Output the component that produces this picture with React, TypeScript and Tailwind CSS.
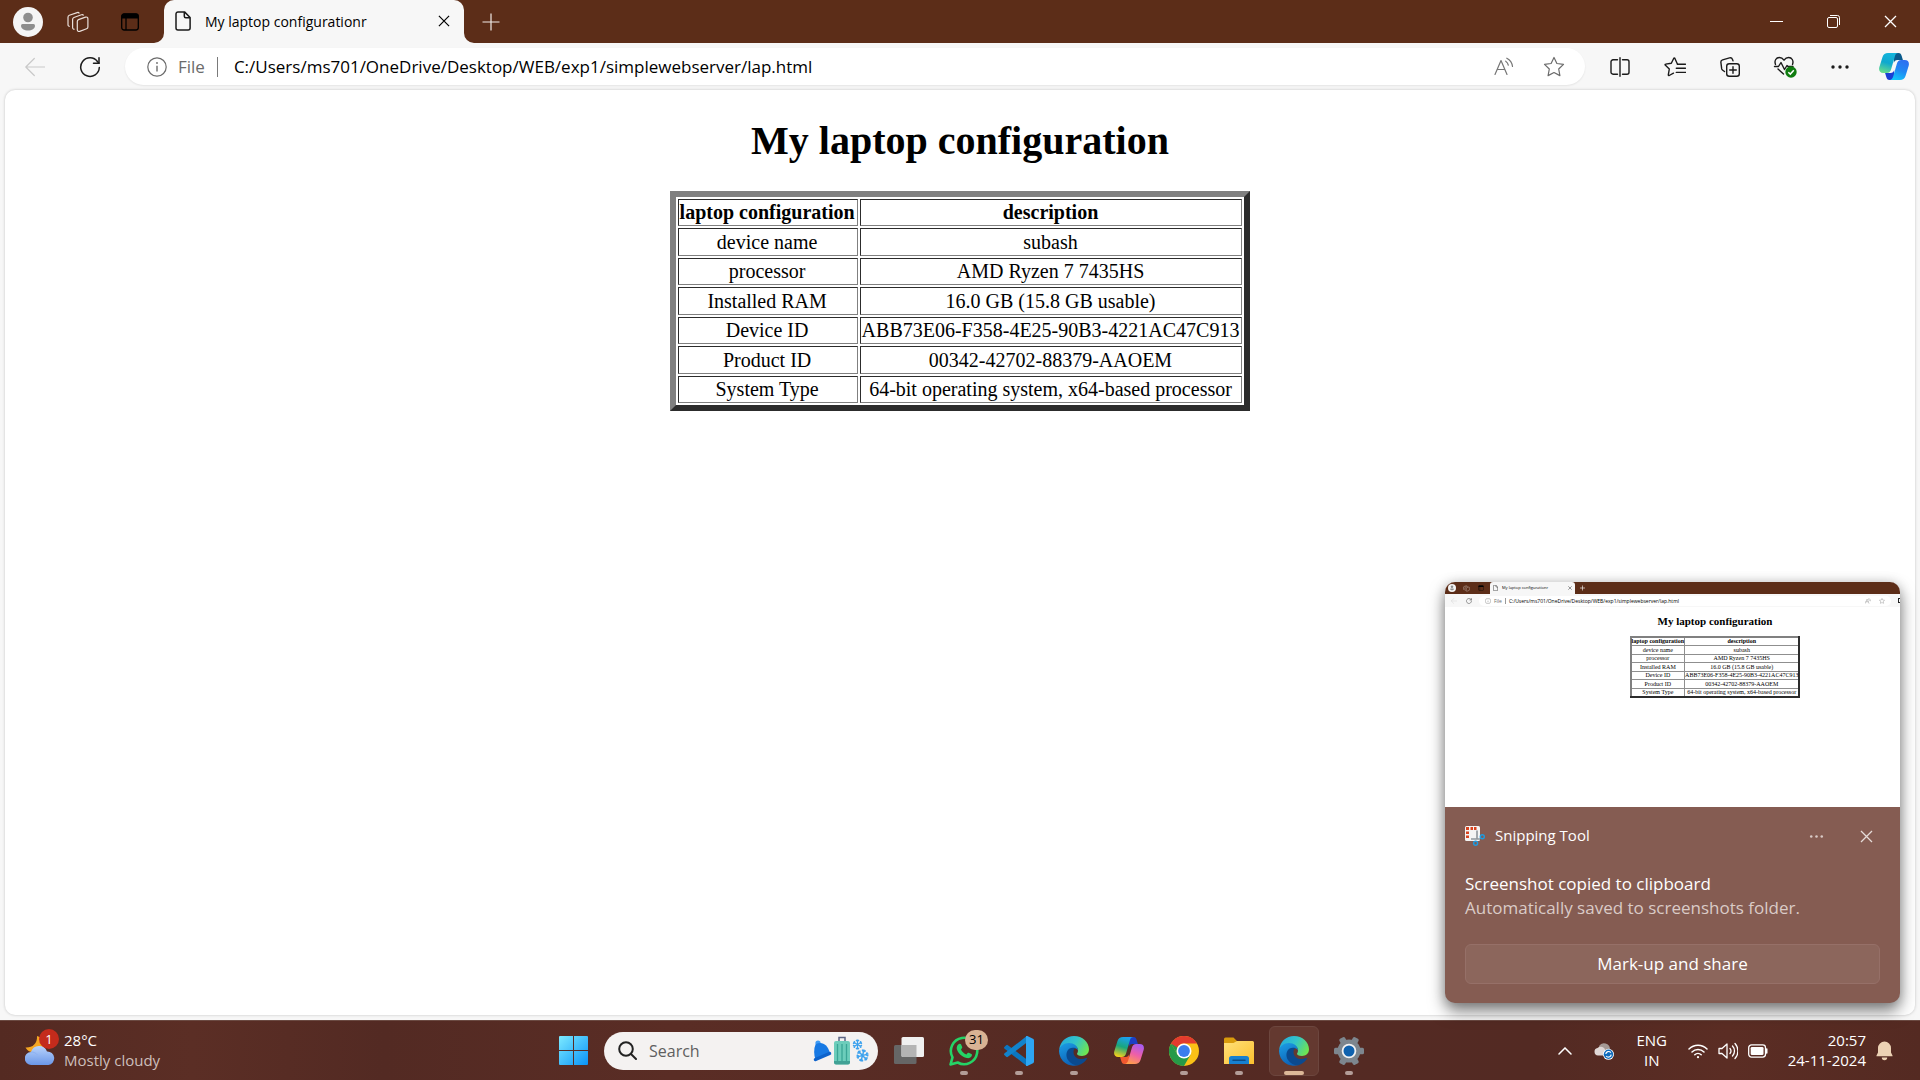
import React from "react";

type IconProps = { className?: string };

const ui = "font-['Open_Sans','Noto_Sans',sans-serif]";
const serif = "font-['Liberation_Serif',serif]";

const specs: [string, string][] = [
  ["device name", "subash"],
  ["processor", "AMD Ryzen 7 7435HS"],
  ["Installed RAM", "16.0 GB (15.8 GB usable)"],
  ["Device ID", "ABB73E06-F358-4E25-90B3-4221AC47C913"],
  ["Product ID", "00342-42702-88379-AAOEM"],
  ["System Type", "64-bit operating system, x64-based processor"],
];

/* ---------- line icons ---------- */

function Avatar({ className = "size-[30px]" }: IconProps) {
  return (
    <svg viewBox="0 0 30 30" className={className} aria-hidden="true">
      <circle cx="15" cy="15" r="15" fill="#f5f5f5" />
      <circle cx="15" cy="10.5" r="4.8" fill="#8e8e8e" />
      <path d="M8 18.5a1.5 1.5 0 0 1 1.5-1.5h11a1.5 1.5 0 0 1 1.5 1.5c0 3.4-3.2 5-7 5s-7-1.6-7-5Z" fill="#8e8e8e" />
    </svg>
  );
}

function Workspaces({ className = "size-6" }: IconProps) {
  return (
    <svg viewBox="0 0 24 24" className={className} fill="none" stroke="#e9dfda" strokeWidth="1.2" strokeLinejoin="round" aria-hidden="true">
      <path d="M12.5 9.6 19.5 7.1a1.8 1.8 0 0 1 2.4 1.7v8.1a2 2 0 0 1-1.3 1.9l-6.9 2.6a1.8 1.8 0 0 1-2.4-1.7v-8.2a2 2 0 0 1 1.2-1.9Z" />
      <path d="M17.6 5.6a1.7 1.7 0 0 0-2.2-.8L7.9 7.5a2 2 0 0 0-1.3 1.9v8.2c0 1 .9 1.8 2 1.6" />
      <path d="M13.3 3.5a1.7 1.7 0 0 0-2.1-.9L3.3 5.3A2 2 0 0 0 2 7.2v7.5c0 1 .8 1.7 1.7 1.6" />
    </svg>
  );
}

function TabActions({ className = "size-5" }: IconProps) {
  return (
    <svg viewBox="0 0 20 20" className={className} aria-hidden="true">
      <rect x="1.7" y="2" width="16.6" height="16" rx="2.5" fill="none" stroke="#000" strokeWidth="1.3" />
      <path d="M1.5 6.5V4A2.5 2.5 0 0 1 4 1.5h12A2.5 2.5 0 0 1 18.5 4v2.5Z" fill="#000" />
      <path d="M6 6v12" stroke="#000" strokeWidth="1.3" />
    </svg>
  );
}

function PageIcon({ className = "h-5 w-4" }: IconProps) {
  return (
    <svg viewBox="0 0 16 20" className={className} fill="none" stroke="#1b1b1b" strokeWidth="1.5" strokeLinejoin="round" aria-hidden="true">
      <path d="M3 .9h6.500l5.600 5.600V17a2 2 0 0 1-2 2H3a2 2 0 0 1-2-2V2.900a2 2 0 0 1 2-2Z" />
      <path d="M9.300 1v4.200a1.500 1.500 0 0 0 1.500 1.500H15" />
    </svg>
  );
}

function Cross({ className = "size-[13px]" }: IconProps) {
  return (
    <svg viewBox="0 0 13 13" className={className} fill="none" stroke="currentColor" aria-hidden="true">
      <path d="m1 1 11 11M12 1 1 12" strokeWidth="1.300" />
    </svg>
  );
}

function BackArrow({ className = "size-5" }: IconProps) {
  return (
    <svg viewBox="0 0 20 20" className={className} fill="none" stroke="#c9c9c9" strokeWidth="1.2" strokeLinecap="round" strokeLinejoin="round" aria-hidden="true">
      <path d="M19.500 10H.8M9.300 1.500.8 10l8.500 8.500" />
    </svg>
  );
}

function Reload({ className = "size-[22px]" }: IconProps) {
  return (
    <svg viewBox="0 0 22 22" className={className} fill="none" stroke="#1b1b1b" strokeWidth="1.5" strokeLinecap="round" strokeLinejoin="round" aria-hidden="true">
      <path d="M20.300 11.500A9.300 9.300 0 1 1 18.600 5.700L20 7.300" />
      <path d="M20 1.800v5.500h-5.500" />
    </svg>
  );
}

function Info({ className = "size-5" }: IconProps) {
  return (
    <svg viewBox="0 0 20 20" className={className} fill="none" stroke="#6b6b6b" strokeWidth="1.2" aria-hidden="true">
      <circle cx="10" cy="10" r="9.2" />
      <path d="M10 8.800v5.700" strokeWidth="1.4" />
      <circle cx="10" cy="6" r=".9" fill="#6b6b6b" stroke="none" />
    </svg>
  );
}

function ReadAloud({ className = "size-5" }: IconProps) {
  return (
    <svg viewBox="0 0 20 20" className={className} fill="none" stroke="#767676" strokeWidth="1.2" strokeLinecap="round" strokeLinejoin="round" aria-hidden="true">
      <path d="M1 17.500 7 3.500l6 14M3.200 12.500h7.700" />
      <path d="M11.700 4.200c1.500 1 2.300 2.300 2.600 4M12.800 1.200c3.300 1.700 5.300 4.400 5.700 8.300" />
    </svg>
  );
}

function Star({ className = "size-[22px]" }: IconProps) {
  return (
    <svg viewBox="0 0 22 22" className={className} fill="none" stroke="#6b6b6b" strokeWidth="1.2" strokeLinejoin="round" aria-hidden="true">
      <path d="M11 1.500l2.900 6 6.600.9-4.800 4.600 1.200 6.600L11 16.500l-5.900 3.100L6.300 13 1.500 8.400l6.600-.9L11 1.500Z" />
    </svg>
  );
}

function SplitScreen() {
  return (
    <svg viewBox="0 0 20 20" className="size-5" fill="none" stroke="#1b1b1b" strokeWidth="1.4" strokeLinecap="round" aria-hidden="true">
      <path d="M10 .8v18.400M7.500 2.800H3a2 2 0 0 0-2 2v10.400a2 2 0 0 0 2 2h4.500M12.500 2.800H17a2 2 0 0 1 2 2v10.400a2 2 0 0 1-2 2h-4.500" />
    </svg>
  );
}

function Favorites() {
  return (
    <svg viewBox="0 0 22 20" className="h-5 w-[22px]" fill="none" stroke="#1b1b1b" strokeWidth="1.4" strokeLinecap="round" strokeLinejoin="round" aria-hidden="true">
      <path d="M13.500 7.200 10.800 1.200a.6.600 0 0 0-1 0L7.300 6.300l-5.700.8a.6.600 0 0 0-.4 1L5.300 12l-1 5.900a.6.600 0 0 0 .9.600l4.300-2.300" />
      <path d="M13.500 7.200h8M12.300 11.300h9.200M12.300 15.400h9.200" />
    </svg>
  );
}

function Collections() {
  return (
    <svg viewBox="0 0 20 20" className="size-5" fill="none" stroke="#1b1b1b" strokeWidth="1.4" strokeLinecap="round" strokeLinejoin="round" aria-hidden="true">
      <rect x="6.700" y="6.700" width="12.600" height="12.600" rx="2.500" />
      <path d="M13 9.700v6.600M9.700 13h6.600M4.500 14.500 2.700 13.200a2 2 0 0 1-1-1.300L.9 5.500a2.500 2.500 0 0 1 1.700-2.700L9.500.9a2.500 2.500 0 0 1 3 1.500l.5 1.500" />
    </svg>
  );
}

function Essentials() {
  return (
    <svg viewBox="0 0 24 22" className="h-[22px] w-6" fill="none" aria-hidden="true">
      <g stroke="#1b1b1b" strokeWidth="1.4" strokeLinecap="round" strokeLinejoin="round">
        <path d="M2.500 8.500C1 4.500 3.300 1.500 6.300 1.500c2 0 3.500 1 4.700 2.700 1.200-1.700 2.700-2.700 4.700-2.700 3 0 5.300 3 3.800 7" />
        <path d="M1.500 10.500h4l2.500-4 3.500 7 2.500-4 1 1h5M5 13l5.500 5" />
      </g>
      <circle cx="18" cy="16" r="5.700" fill="#107c10" />
      <path d="m15.300 16.200 2 1.900 3.500-3.900" stroke="#fff" strokeWidth="1.5" />
    </svg>
  );
}

function Dots({ className = "h-1 w-[18px]" }: IconProps) {
  return (
    <svg viewBox="0 0 18 4" className={className} fill="currentColor" aria-hidden="true">
      <circle cx="2" cy="2" r="1.700" />
      <circle cx="9" cy="2" r="1.700" />
      <circle cx="16" cy="2" r="1.700" />
    </svg>
  );
}

/* ---------- colour icons ---------- */

function Copilot({ vivid = false }: { vivid?: boolean }) {
  const k = vivid ? "v" : "b";
  const a = vivid ? ["#1ba0f2", "#19a67c", "#f4cf1c"] : ["#14b5dc", "#0fa8cf", "#67dd8b"];
  const b = vivid ? ["#a85cf0", "#ee5fa8", "#ffa04a"] : ["#2f6ff0", "#2088f3", "#12c7fa"];
  return (
    <svg viewBox="0 0 30 27" className="h-[27px] w-[30px]" aria-hidden="true">
      <defs>
        <linearGradient id={`cpa${k}`} x1=".6" y1="0" x2=".3" y2="1">
          <stop offset="0" stopColor={a[0]} />
          <stop offset=".5" stopColor={a[1]} />
          <stop offset="1" stopColor={a[2]} />
        </linearGradient>
        <linearGradient id={`cpb${k}`} x1=".7" y1="0" x2=".3" y2="1">
          <stop offset="0" stopColor={b[0]} />
          <stop offset=".5" stopColor={b[1]} />
          <stop offset="1" stopColor={b[2]} />
        </linearGradient>
      </defs>
      <path d="M15 0h4.500c2 0 2.600 1.200 3.200 3l1.200 4h-5.500c-2 0-3 1-3.600 3Z" fill={vivid ? "#1d3fc4" : "#0a5a8c"} />
      <path d="M15 27h-4.500c-2 0-2.600-1.200-3.200-3l-1.200-4h5.500c2 0 3-1 3.600-3Z" fill={vivid ? "#f0582f" : "#1a3fd4"} />
      <path d="M9 0h10.500c-2 0-3 1.200-3.600 3.200L12.200 16c-.7 2.500-2 4-4.500 4H4.300C.8 20-.5 17.500.3 14.300L3.500 4C4.300 1.300 6.200 0 9 0Z" fill={`url(#cpa${k})`} />
      <path d="M21 27H10.500c2 0 3-1.200 3.600-3.200L17.800 11c.7-2.500 2-4 4.500-4h3.400c3.500 0 4.800 2.500 4 5.700L26.500 23c-.8 2.700-2.700 4-5.500 4Z" fill={`url(#cpb${k})`} />
    </svg>
  );
}

function Weather() {
  return (
    <svg viewBox="0 0 30 30" className="size-[30px]" aria-hidden="true">
      <defs>
        <linearGradient id="cloud" x1="0" y1="0" x2="0" y2="1">
          <stop offset="0" stopColor="#b9d3fb" />
          <stop offset="1" stopColor="#6b97e8" />
        </linearGradient>
      </defs>
      <path d="M12 0c4 1 7 4.500 7 8.500 0 5-4 8-9 8-4.500 0-8-2-9.500-5C7 12 12.500 8 12 0Z" fill="#f5a623" />
      <path d="M6.500 29a6.500 6.500 0 0 1-.5-13A8.500 8.500 0 0 1 22 15.500a6.800 6.800 0 0 1 1.500 13.500Z" fill="url(#cloud)" />
      <path d="M6 16c3 0 5 1 6.500 3" stroke="#8db2f3" fill="none" />
    </svg>
  );
}

function WindowsLogo() {
  return (
    <svg viewBox="0 0 29 29" className="size-[29px]" aria-hidden="true">
      <defs>
        <linearGradient id="win" x1="0" y1="0" x2="1" y2="1">
          <stop offset="0" stopColor="#7deaff" />
          <stop offset="1" stopColor="#0a93f7" />
        </linearGradient>
      </defs>
      <path d="M1 0h13v14H0V1a1 1 0 0 1 1-1Zm14 0h13a1 1 0 0 1 1 1v13H15ZM0 15h14v14H1a1 1 0 0 1-1-1Zm15 0h14v13a1 1 0 0 1-1 1H15Z" fill="url(#win)" />
    </svg>
  );
}

function SearchArt() {
  const flake = "M0-5V5M-4.300-2.500l8.600 5M-4.300 2.500l8.600-5M-1.500-4.500 0-3l1.500-1.500M-1.500 4.500 0 3l1.500 1.500M-4.600-.8l2-.6-.5-2M4.600.8l-2 .6.500 2M-4.600.8l2 .6-.5 2M4.600-.8l-2-.6.5-2";
  return (
    <svg viewBox="0 0 57 32" className="h-8 w-[57px]" aria-hidden="true">
      <circle cx="5" cy="8" r="2.600" fill="#3d9bf5" />
      <path d="M2.500 9.500c6-3.500 12-.5 14.500 9L2.500 24.500C.8 20 .6 14 2.500 9.500Z" fill="#1779e4" />
      <path d="m2.500 24.500 14-6" stroke="#0d62cb" strokeWidth="3.500" strokeLinecap="round" />
      <path d="M26 6V2.500h6V6" fill="none" stroke="#5b6684" strokeWidth="1.5" />
      <rect x="21" y="6" width="16" height="23.500" rx="2" fill="#6ccdbb" />
      <path d="M24.500 9v17M29 9v17M33.500 9v17" stroke="#3aa596" strokeWidth="1.3" />
      <path d="M21 26h16v1.500a2 2 0 0 1-2 2H23a2 2 0 0 1-2-2Z" fill="#2f8f84" opacity=".7" />
      <g fill="none" stroke="#3da2ee" strokeWidth="1.2">
        <path d={flake} transform="translate(44.500 9.500)" />
        <path d={flake} transform="translate(49.500 20.500) rotate(15) scale(1.250)" />
      </g>
    </svg>
  );
}

function TaskView() {
  return (
    <svg viewBox="0 0 30 30" className="size-[30px]" aria-hidden="true">
      <rect y="9" width="22.500" height="19" rx="1.500" fill="#666" />
      <rect x="7.500" y="1" width="22.500" height="20" rx="1.500" fill="#f0f0f0" />
      <path d="M7.500 9h15v12H9a1.500 1.500 0 0 1-1.500-1.500Z" fill="#b4b4b4" />
    </svg>
  );
}

function WhatsApp() {
  return (
    <svg viewBox="0 0 30 30" className="size-[30px]" aria-hidden="true">
      <path d="M1.500 28.500 3.500 21.300A13.200 13.200 0 1 1 8.700 26.500Z" fill="none" stroke="#25d366" strokeWidth="2.600" strokeLinejoin="round" />
      <path d="M10.500 7.700c.7-.2 1.200 0 1.500.6l1.200 2.800c.2.500 0 1-1.200 2.300 1.200 2.500 3 4 5.500 5 1.300-1.600 1.700-1.800 2.200-1.600l2.700 1.300c.7.400.6 1 .4 1.700-.7 2-3 2.800-5 2.300-5-1.200-8.500-4.500-10-9-.5-2.200.7-4.800 2.700-5.400Z" fill="#25d366" />
    </svg>
  );
}

function VSCode() {
  return (
    <svg viewBox="0 0 30 30" className="size-[30px]" aria-hidden="true">
      <path d="M.6 10.800 2.200 9.200a1.300 1.300 0 0 1 1.700 0L23.500 24v5.600c-.6.200-1.200 0-1.700-.4L.6 12.800a1.300 1.300 0 0 1 0-2Z" fill="#0b76c0" />
      <path d="M.6 19.200 2.200 20.800a1.300 1.300 0 0 0 1.700 0L23.500 6V.4c-.6-.2-1.200 0-1.700.4L.6 17.200a1.300 1.300 0 0 0 0 2Z" fill="#1283cc" />
      <path d="M22 .2c.5-.3 1.200-.3 1.800 0L29 2.800c.6.300 1 1 1 1.700v21c0 .7-.4 1.400-1 1.700l-5.200 2.600c-.6.300-1.300.3-1.800 0Z" fill="#2ea6f3" />
    </svg>
  );
}

function Edge({ id }: { id: string }) {
  return (
    <svg viewBox="0 0 30 30" className="size-[30px]" aria-hidden="true">
      <defs>
        <linearGradient id={`${id}a`} x1="0" y1=".2" x2="1" y2=".6">
          <stop offset="0" stopColor="#25a9dc" />
          <stop offset=".5" stopColor="#33c4c9" />
          <stop offset="1" stopColor="#6ee552" />
        </linearGradient>
        <linearGradient id={`${id}b`} x1=".2" y1="0" x2=".6" y2="1">
          <stop offset="0" stopColor="#1b9be3" />
          <stop offset="1" stopColor="#0c5fb4" />
        </linearGradient>
      </defs>
      <path d="M.2 13.500C1 5.800 7.300 0 15 0c8.500 0 15 6.200 15 13.300 0 4.500-3.200 6.700-7 6.700-3.500 0-5-1.200-5-2.200 0-.7 1-1.200 1-3.300C19 11 15.500 8.500 11 8.500 6 8.500 2 10.500.2 13.500Z" fill={`url(#${id}a)`} />
      <path d="M0 15C.5 10 5 7 9.800 7 15 7 19 10 19 14.500c-.8-1.700-2.500-2.700-4.300-2.500-3.200.3-5.200 3.500-4.700 7.500.6 4.800 5 9 9.500 9.600A15 15 0 0 1 0 15Z" fill={`url(#${id}b)`} />
      <path d="M10.600 12.500C7 15 6.500 20 9 24c2.500 3.800 6.500 5.500 10.300 5.300 3.700-1.100 6.700-3.500 8.600-6.600.3-.6-.2-1-.8-.7-5.500 2.600-12.600.5-12.600-6 0-1.500.7-3 1.800-3.900-2-.7-4-.6-5.700.4Z" fill="#0b4a8f" />
    </svg>
  );
}

function Chrome() {
  return (
    <svg viewBox="0 0 30 30" className="size-[30px]" aria-hidden="true">
      <circle cx="15" cy="15" r="15" fill="#fbc116" />
      <path d="M2 7.500A15 15 0 0 0 15 30l6.500-11.200L15 15l-6.500 3.700Z" fill="#269a48" />
      <path d="M2 7.500A15 15 0 0 1 28 7.500H15a7.500 7.500 0 0 0-7 4.800L6.300 14Z" fill="#e33b2e" />
      <path d="M2 7.500 8.500 18.700 9 12Z" fill="#269a48" />
      <circle cx="15" cy="15" r="7.500" fill="#fff" />
      <circle cx="15" cy="15" r="5.900" fill="#3b7ded" />
    </svg>
  );
}

function Explorer() {
  return (
    <svg viewBox="0 0 30 28" className="h-7 w-[30px]" aria-hidden="true">
      <defs>
        <linearGradient id="folder" x1="0" y1="0" x2="1" y2="1">
          <stop offset="0" stopColor="#ffe07a" />
          <stop offset="1" stopColor="#fcc02e" />
        </linearGradient>
      </defs>
      <path d="M0 2a1.500 1.500 0 0 1 1.500-1.500h8L13 4h15.500v5H0Z" fill="#d99b0c" />
      <path d="M0 6h9.500L13 4h15.500A1.500 1.500 0 0 1 30 5.500V27H0Z" fill="url(#folder)" />
      <path d="M5 21.500A2.500 2.500 0 0 1 7.500 19h15a2.500 2.500 0 0 1 2.500 2.500V27H5Z" fill="#1780d0" />
      <path d="M9 23.200h12" stroke="#0b4c86" strokeWidth="1.5" strokeLinecap="round" />
    </svg>
  );
}

function Settings() {
  return (
    <svg viewBox="0 0 30 30" className="size-[30px]" aria-hidden="true">
      <g fill="#7d868e">
        <circle cx="15" cy="15" r="11.500" />
        <rect x="11.800" y="0" width="6.400" height="30" rx="1.500" transform="rotate(30 15 15)" />
        <rect x="11.800" y="0" width="6.400" height="30" rx="1.500" transform="rotate(90 15 15)" />
        <rect x="11.800" y="0" width="6.400" height="30" rx="1.500" transform="rotate(150 15 15)" />
      </g>
      <circle cx="15" cy="15" r="6.400" fill="#0f62ae" stroke="#f2f2f2" strokeWidth="1.800" />
    </svg>
  );
}

function SnippingTool() {
  return (
    <svg viewBox="0 0 20 20" className="size-5" aria-hidden="true">
      <rect width="15" height="15" rx="1.500" fill="#f4f4f4" />
      <path d="M1 1h3v3H1Zm4.500 0h2.500v3H5.500ZM9 1h2.500v3H9ZM1 5.500h3V8H1Zm0 4h3V12H1Z" fill="#d8431f" />
      <path d="M12 4.500v8.500M6 13h9" stroke="#8f979d" strokeWidth="1.600" />
      <circle cx="17.300" cy="10.800" r="2" fill="none" stroke="#1e9be0" strokeWidth="1.400" />
      <circle cx="10.600" cy="17.300" r="2" fill="none" stroke="#1e9be0" strokeWidth="1.400" />
    </svg>
  );
}

/* ---------- browser window ---------- */

function TitleBar() {
  const winBtn = "flex h-full w-[57px] items-center justify-center";
  return (
    <header className="flex h-[43px] items-stretch bg-[#5c2d18] text-white">
      <button aria-label="Profile" className="ml-[13px] flex items-center"><Avatar /></button>
      <button aria-label="Workspaces" className="ml-[23px] flex items-center"><Workspaces /></button>
      <button aria-label="Tab actions" className="ml-[30px] flex items-center"><TabActions /></button>
      <div className="relative ml-6 flex w-[300px] items-center rounded-t-[10px] bg-[#f7f7f7] pr-3 pb-px pl-[11px] text-black">
        <svg viewBox="0 0 10 10" className="absolute bottom-0 -left-[10px] size-[10px]" aria-hidden="true"><path d="M10 0v10H0A10 10 0 0 0 10 0Z" fill="#f7f7f7" /></svg>
        <svg viewBox="0 0 10 10" className="absolute -right-[10px] bottom-0 size-[10px]" aria-hidden="true"><path d="M0 0v10h10A10 10 0 0 1 0 0Z" fill="#f7f7f7" /></svg>
        <PageIcon />
        <span className="ml-[14px] flex-1 text-[14px] whitespace-nowrap">My laptop configurationr</span>
        <button aria-label="Close tab" className="flex size-4 items-center justify-center"><Cross className="size-3" /></button>
      </div>
      <button aria-label="New tab" className="ml-[18px] flex items-center">
        <svg viewBox="0 0 18 18" className="size-[18px]" aria-hidden="true"><path d="M9 .5v17M.5 9h17" stroke="#f1ebe8" strokeWidth="1.200" /></svg>
      </button>
      <div className="mr-px ml-auto flex">
        <button aria-label="Minimize" className={winBtn}>
          <svg viewBox="0 0 13 13" className="size-[13px]" aria-hidden="true"><path d="M0 6.500h13" stroke="#fff" /></svg>
        </button>
        <button aria-label="Restore" className={winBtn}>
          <svg viewBox="0 0 13 13" className="size-[13px]" fill="none" stroke="#fff" aria-hidden="true">
            <rect x=".5" y="2.500" width="10" height="10" rx="1.500" />
            <path d="M3 .5h7.500a2 2 0 0 1 2 2V10" />
          </svg>
        </button>
        <button aria-label="Close" className={winBtn}><Cross /></button>
      </div>
    </header>
  );
}

function Toolbar() {
  const btn = "flex h-9 w-[55px] shrink-0 items-center justify-center text-[#1b1b1b]";
  return (
    <nav aria-label="Browser toolbar" className="flex h-[46px] items-center pt-px pl-[7px]">
      <button aria-label="Back" className={btn}><BackArrow /></button>
      <button aria-label="Reload" className={btn}><Reload /></button>
      <div className="mr-[7px] ml-2 flex h-[37px] flex-1 items-center rounded-full bg-white pr-5 pl-[22px] shadow-[0_1px_2px_rgba(0,0,0,0.08)]">
        <Info />
        <label htmlFor="address" className="ml-[11px] text-[17px] text-[#6b6b6b]">File</label>
        <span className="ml-3 h-5 w-px bg-[#7a7a7a]" />
        <input id="address" type="text" defaultValue="C:/Users/ms701/OneDrive/Desktop/WEB/exp1/simplewebserver/lap.html" className="ml-4 min-w-0 flex-1 bg-transparent text-[17px] text-black outline-none" />
        <button aria-label="Read aloud"><ReadAloud /></button>
        <button aria-label="Add to favourites" className="ml-[29px]"><Star /></button>
      </div>
      <button aria-label="Split screen" className={btn}><SplitScreen /></button>
      <button aria-label="Favourites" className={btn}><Favorites /></button>
      <button aria-label="Collections" className={btn}><Collections /></button>
      <button aria-label="Browser essentials" className={btn}><Essentials /></button>
      <button aria-label="Settings and more" className={btn}><Dots /></button>
      <button aria-label="Copilot" className="flex h-9 w-[53px] shrink-0 items-center justify-center"><Copilot /></button>
    </nav>
  );
}

function LaptopPage() {
  const cell = "border border-t-[#2c2c2c] border-r-[#808080] border-b-[#808080] border-l-[#2c2c2c] py-0 pr-0.5 pl-px";
  return (
    <main className={`flex-1 pt-7 text-black ${serif}`}>
      <h1 className="mb-[27px] text-center text-[40px] leading-[46px] font-bold">My laptop configuration</h1>
      <table className="mx-auto border-separate border-spacing-[2px] border-6 border-t-[#808080] border-r-[#2c2c2c] border-b-[#2c2c2c] border-l-[#808080] text-center text-[20px] leading-[23px] whitespace-nowrap">
        <thead>
          <tr className="h-[27px]">
            <th scope="col" className={cell}>laptop configuration</th>
            <th scope="col" className={cell}>description</th>
          </tr>
        </thead>
        <tbody>
          {specs.map(([k, v]) => (
            <tr key={k} className="h-[27px] odd:h-7">
              <td className={cell}>{k}</td>
              <td className={cell}>{v}</td>
            </tr>
          ))}
        </tbody>
      </table>
    </main>
  );
}

/* ---------- notification ---------- */

function Thumbnail() {
  const cell = "border border-[#8f8f8f] p-0";
  return (
    <div className="flex h-[225px] flex-col overflow-hidden rounded-t-[10px] bg-white text-black">
      <div className="flex h-3 items-stretch bg-[#5c2d18]">
        <span className="ml-[3px] flex items-center"><Avatar className="size-2" /></span>
        <span className="ml-[7px] flex items-center"><Workspaces className="size-[7px]" /></span>
        <span className="ml-2 flex items-center"><TabActions className="size-[6px]" /></span>
        <span className="ml-[6px] flex w-[85px] items-center rounded-t-[3px] bg-[#f7f7f7] px-[3px]">
          <PageIcon className="h-[6px] w-[5px]" />
          <span className="ml-1 flex-1 text-[4px] leading-3 whitespace-nowrap">My laptop configurationr</span>
          <Cross className="size-1" />
        </span>
        <svg viewBox="0 0 5 5" className="ml-[5px] w-[5px]" aria-hidden="true"><path d="M2.500 0v5M0 2.500h5" stroke="#fff" strokeWidth=".6" /></svg>
      </div>
      <div className="flex h-[13px] items-center bg-[#f7f7f7] pl-[6px]">
        <BackArrow className="size-[6px]" />
        <Reload className="ml-[9px] size-[6px]" />
        <div className="mr-[7px] ml-[7px] flex h-[10px] flex-1 items-center rounded-full bg-white px-[6px] text-[5px] leading-[10px]">
          <Info className="size-[6px]" />
          <span className="ml-[3px] text-[#6b6b6b]">File</span>
          <span className="mx-[3px] h-[6px] w-px bg-[#999]" />
          <span className="flex-1 whitespace-nowrap">C:/Users/ms701/OneDrive/Desktop/WEB/exp1/simplewebserver/lap.html</span>
          <ReadAloud className="size-[6px]" />
          <Star className="ml-2 size-[6px]" />
        </div>
        <span className="h-[5px] w-[2px] border border-r-0 border-[#222]" />
      </div>
      <div className={`pt-2 pr-[93px] pl-[178px] whitespace-nowrap ${serif}`}>
        <p className="mb-2 flex justify-center text-[11px] leading-[13px] font-bold">My laptop configuration</p>
        <div className="flex justify-center">
          <table className="border-2 border-t-[#808080] border-r-[#2c2c2c] border-b-[#2c2c2c] border-l-[#808080] text-center text-[6px] leading-[7px]">
            <thead>
              <tr>
                <th scope="col" className={cell}>laptop configuration</th>
                <th scope="col" className={cell}>description</th>
              </tr>
            </thead>
            <tbody>
              {specs.map(([k, v]) => (
                <tr key={k} className="odd:h-[9px]">
                  <td className={cell}>{k}</td>
                  <td className={cell}>{v}</td>
                </tr>
              ))}
            </tbody>
          </table>
        </div>
      </div>
    </div>
  );
}

function Notification() {
  return (
    <aside aria-label="Notification" className="absolute right-5 bottom-[77px] w-[455px] rounded-[10px] bg-[#855c52] text-white shadow-[0_8px_16px_rgba(0,0,0,0.5),0_0_12px_rgba(0,0,0,0.15)]">
      <Thumbnail />
      <div className="px-5 py-[19px]">
        <div className="flex h-5 items-center">
          <SnippingTool />
          <span className="ml-[10px] flex-1 pb-0.5 text-[15px] leading-5">Snipping Tool</span>
          <button aria-label="More options" className="text-[#d9cac6]"><Dots className="h-[3px] w-[15px]" /></button>
          <button aria-label="Dismiss" className="mr-[7px] ml-9 text-[#e6dcd9]"><Cross /></button>
        </div>
        <p className="mt-[26px] text-[17px] leading-6">Screenshot copied to clipboard</p>
        <p className="text-[17px] leading-6 text-[#dacbc7]">Automatically saved to screenshots folder.</p>
        <button className="mt-6 h-10 w-full rounded-md border border-[#967068] bg-[#8c665c] text-[17px]">Mark-up and share</button>
      </div>
    </aside>
  );
}

/* ---------- taskbar ---------- */

type TaskbarApp = { name: string; icon: React.ReactNode; state?: "running" | "active"; badge?: string };

const apps: TaskbarApp[] = [
  { name: "Task view", icon: <TaskView /> },
  { name: "WhatsApp", icon: <WhatsApp />, state: "running", badge: "31" },
  { name: "Visual Studio Code", icon: <VSCode />, state: "running" },
  { name: "Microsoft Edge", icon: <Edge id="e1" />, state: "running" },
  { name: "Copilot", icon: <Copilot vivid /> },
  { name: "Google Chrome", icon: <Chrome />, state: "running" },
  { name: "File Explorer", icon: <Explorer />, state: "running" },
  { name: "Microsoft Edge window", icon: <Edge id="e2" />, state: "active" },
  { name: "Settings", icon: <Settings />, state: "running" },
];

function Taskbar() {
  return (
    <footer className="grid h-[60px] grid-cols-[1fr_auto_1fr] items-center border-t border-[#6b4a42] bg-[linear-gradient(90deg,#542a22,#5b2e25_10%,#532a23_20%,#5a2d25_35%,#552a23_60%,#532a23_80%,#5b2d24_90%,#542a22)] text-white">
      <button className="flex items-center pl-[25px] text-left text-[15px] leading-5">
        <span className="relative">
          <Weather />
          <span className="absolute -top-[7px] left-[14px] flex size-5 items-center justify-center rounded-full bg-[#c42b1c] text-[13px]">1</span>
        </span>
        <span className="ml-[9px] pb-0.5">
          <span className="block">28°C</span>
          <span className="block text-[#cdbfbb]">Mostly cloudy</span>
        </span>
      </button>
      <div className="flex items-center gap-[5px] pl-0.5">
        <button aria-label="Start" className="flex size-[50px] items-center justify-center"><WindowsLogo /></button>
        <div className="mx-px flex h-[38px] w-[274px] items-center rounded-full bg-[#f4f2f1] pr-2 pl-[14px]">
          <svg viewBox="0 0 19 19" className="size-[19px] shrink-0" fill="none" stroke="#222" strokeWidth="2" aria-hidden="true">
            <circle cx="8" cy="8" r="6.800" />
            <path d="m13 13 5 5" strokeLinecap="round" />
          </svg>
          <input type="search" aria-label="Search" placeholder="Search" className="ml-3 min-w-0 flex-1 bg-transparent text-[16px] text-black outline-none placeholder:text-[#5f5f5f]" />
          <SearchArt />
        </div>
        {apps.map((a) => (
          <button key={a.name} aria-label={a.name} className={`relative flex size-[50px] items-center justify-center rounded-md border ${a.state === "active" ? "border-[#6c463e] bg-[#643930]" : "border-transparent"}`}>
            {a.icon}
            {a.badge && (
              <span className="absolute top-[3px] right-0 flex h-5 w-[23px] items-center justify-center rounded-full bg-[#d9b394] text-[13px] text-black">{a.badge}</span>
            )}
            {a.state && (
              <span className={`absolute bottom-0 left-1/2 h-1 -translate-x-1/2 rounded-full ${a.state === "active" ? "w-5 bg-[#dcb898]" : "w-2 bg-[#b39d98]"}`} />
            )}
          </button>
        ))}
      </div>
      <div className="flex items-center justify-end pr-[27px] text-[15px] leading-5">
        <button aria-label="Show hidden icons">
          <svg viewBox="0 0 14 8" className="h-2 w-[14px]" fill="none" stroke="#fff" strokeWidth="1.500" strokeLinecap="round" aria-hidden="true"><path d="m1 7 6-6 6 6" /></svg>
        </button>
        <button aria-label="OneDrive" className="ml-[22px]">
          <svg viewBox="0 0 20 18" className="h-[18px] w-5" aria-hidden="true">
            <path d="M5 4a6 6 0 0 1 11 3v4H6Z" fill="#a59995" />
            <path d="M4 13.500a3.800 3.800 0 0 1-.5-7.500 5 5 0 0 1 7 .5l3 7Z" fill="#e0d8d6" />
            <circle cx="14.500" cy="12.300" r="5.500" fill="#fff" />
            <circle cx="14.500" cy="12.300" r="4.700" fill="#0f6cbd" />
            <path d="M11.800 12a2.800 2.800 0 0 1 5-1.400M17.200 12.600a2.800 2.800 0 0 1-5 1.400" fill="none" stroke="#fff" strokeWidth="1.200" />
          </svg>
        </button>
        <button className="ml-[22px] w-8 pb-0.5 text-center">
          <span className="block">ENG</span>
          <span className="block">IN</span>
        </button>
        <button aria-label="Network, volume and battery" className="ml-5 flex items-center gap-[10px]">
          <svg viewBox="0 0 20 16" className="h-4 w-5" fill="none" stroke="#fff" strokeWidth="1.500" strokeLinecap="round" aria-hidden="true">
            <path d="M1 6a12.600 12.600 0 0 1 18 0M4 9a8.500 8.500 0 0 1 12 0M6.800 11.700a4.600 4.600 0 0 1 6.400 0" />
            <circle cx="10" cy="14.200" r="1.100" fill="#fff" stroke="none" />
          </svg>
          <svg viewBox="0 0 20 18" className="h-[18px] w-5" fill="none" stroke="#fff" strokeWidth="1.300" strokeLinecap="round" strokeLinejoin="round" aria-hidden="true">
            <path d="M1 6.500v5h3L9 16V2L4 6.500ZM12 6.500a4 4 0 0 1 0 5M14.500 4a7.300 7.300 0 0 1 0 10M17 1.500a11 11 0 0 1 0 15" />
          </svg>
          <svg viewBox="0 0 20 14" className="h-[14px] w-5" aria-hidden="true">
            <rect x=".7" y=".9" width="16.800" height="12.200" rx="2.800" fill="none" stroke="#fff" strokeWidth="1.300" />
            <rect x="2.700" y="2.900" width="12.800" height="8.200" rx="1.300" fill="#fff" />
            <path d="M18.700 5v4" stroke="#fff" strokeWidth="1.600" strokeLinecap="round" />
          </svg>
        </button>
        <button className="ml-5 pb-0.5 text-right">
          <time className="block">20:57</time>
          <time className="block" dateTime="2024-11-24">24-11-2024</time>
        </button>
        <button aria-label="Notifications" className="ml-[10px]">
          <svg viewBox="0 0 17 20" className="h-5 w-[17px]" fill="#ecd2b4" aria-hidden="true">
            <path d="M8.500.5A6.500 6.500 0 0 1 15 7v4.500l1.500 3v.8H.5v-.8l1.500-3V7A6.500 6.500 0 0 1 8.500.5ZM5.800 16.500h5.400a2.700 2.700 0 0 1-5.400 0Z" />
          </svg>
        </button>
      </div>
    </footer>
  );
}

export default function App() {
  return (
    <div className={`relative flex min-h-screen flex-col bg-[#f7f7f7] ${ui}`}>
      <TitleBar />
      <Toolbar />
      <div className="mx-[5px] mt-px mb-[5px] flex flex-1 flex-col rounded-[10px] bg-white shadow-[0_0_3px_rgba(0,0,0,0.22)]">
        <LaptopPage />
      </div>
      <Taskbar />
      <Notification />
    </div>
  );
}
